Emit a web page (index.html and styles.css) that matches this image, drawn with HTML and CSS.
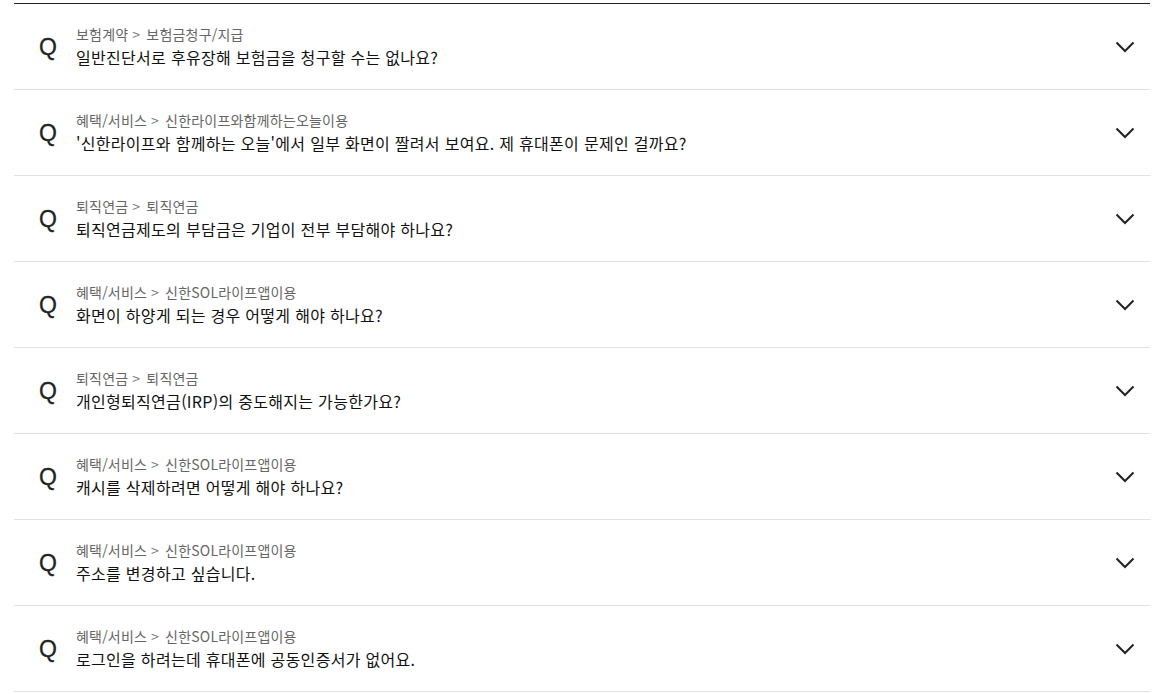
FILE: index.html
```html
<!DOCTYPE html>
<html lang="ko">
<head>
  <meta charset="UTF-8" />
  <title>자주 묻는 질문</title>
  <link rel="stylesheet" href="styles.css">
</head>
<body>
  <ul class="faq-list">
    <li class="faq-item">
      <span class="faq-q">Q</span>
      <div class="faq-text">
        <p class="faq-cate">보험계약<span class="sep">&gt;</span>보험금청구/지급</p>
        <p class="faq-title">일반진단서로 후유장해 보험금을 청구할 수는 없나요?</p>
      </div>
      <svg class="faq-arrow" width="20" height="12" viewBox="0 0 20 12"><path d="M1.5 1.5 L10 10 L18.5 1.5" fill="none" stroke="#222" stroke-width="2"/></svg>
    </li>
    <li class="faq-item">
      <span class="faq-q">Q</span>
      <div class="faq-text">
        <p class="faq-cate">혜택/서비스<span class="sep">&gt;</span>신한라이프와함께하는오늘이용</p>
        <p class="faq-title">'신한라이프와 함께하는 오늘'에서 일부 화면이 짤려서 보여요. 제 휴대폰이 문제인 걸까요?</p>
      </div>
      <svg class="faq-arrow" width="20" height="12" viewBox="0 0 20 12"><path d="M1.5 1.5 L10 10 L18.5 1.5" fill="none" stroke="#222" stroke-width="2"/></svg>
    </li>
    <li class="faq-item">
      <span class="faq-q">Q</span>
      <div class="faq-text">
        <p class="faq-cate">퇴직연금<span class="sep">&gt;</span>퇴직연금</p>
        <p class="faq-title">퇴직연금제도의 부담금은 기업이 전부 부담해야 하나요?</p>
      </div>
      <svg class="faq-arrow" width="20" height="12" viewBox="0 0 20 12"><path d="M1.5 1.5 L10 10 L18.5 1.5" fill="none" stroke="#222" stroke-width="2"/></svg>
    </li>
    <li class="faq-item">
      <span class="faq-q">Q</span>
      <div class="faq-text">
        <p class="faq-cate">혜택/서비스<span class="sep">&gt;</span>신한SOL라이프앱이용</p>
        <p class="faq-title">화면이 하양게 되는 경우 어떻게 해야 하나요?</p>
      </div>
      <svg class="faq-arrow" width="20" height="12" viewBox="0 0 20 12"><path d="M1.5 1.5 L10 10 L18.5 1.5" fill="none" stroke="#222" stroke-width="2"/></svg>
    </li>
    <li class="faq-item">
      <span class="faq-q">Q</span>
      <div class="faq-text">
        <p class="faq-cate">퇴직연금<span class="sep">&gt;</span>퇴직연금</p>
        <p class="faq-title">개인형퇴직연금(IRP)의 중도해지는 가능한가요?</p>
      </div>
      <svg class="faq-arrow" width="20" height="12" viewBox="0 0 20 12"><path d="M1.5 1.5 L10 10 L18.5 1.5" fill="none" stroke="#222" stroke-width="2"/></svg>
    </li>
    <li class="faq-item">
      <span class="faq-q">Q</span>
      <div class="faq-text">
        <p class="faq-cate">혜택/서비스<span class="sep">&gt;</span>신한SOL라이프앱이용</p>
        <p class="faq-title">캐시를 삭제하려면 어떻게 해야 하나요?</p>
      </div>
      <svg class="faq-arrow" width="20" height="12" viewBox="0 0 20 12"><path d="M1.5 1.5 L10 10 L18.5 1.5" fill="none" stroke="#222" stroke-width="2"/></svg>
    </li>
    <li class="faq-item">
      <span class="faq-q">Q</span>
      <div class="faq-text">
        <p class="faq-cate">혜택/서비스<span class="sep">&gt;</span>신한SOL라이프앱이용</p>
        <p class="faq-title">주소를 변경하고 싶습니다.</p>
      </div>
      <svg class="faq-arrow" width="20" height="12" viewBox="0 0 20 12"><path d="M1.5 1.5 L10 10 L18.5 1.5" fill="none" stroke="#222" stroke-width="2"/></svg>
    </li>
    <li class="faq-item">
      <span class="faq-q">Q</span>
      <div class="faq-text">
        <p class="faq-cate">혜택/서비스<span class="sep">&gt;</span>신한SOL라이프앱이용</p>
        <p class="faq-title">로그인을 하려는데 휴대폰에 공동인증서가 없어요.</p>
      </div>
      <svg class="faq-arrow" width="20" height="12" viewBox="0 0 20 12"><path d="M1.5 1.5 L10 10 L18.5 1.5" fill="none" stroke="#222" stroke-width="2"/></svg>
    </li>
  </ul>
</body>
</html>
```

FILE: styles.css
```css
body {
  margin: 0;
  background: #fff;
  font-family: "Noto Sans CJK KR", "Noto Sans", sans-serif;
  color: #111;
}
.faq-list {
  list-style: none;
  margin: 3px 0 0 14px;
  padding: 0;
  width: 1136px;
  border-top: 1px solid #222;
}
.faq-item {
  display: flex;
  align-items: center;
  height: 85px;
  border-bottom: 1px solid #e2e2e2;
}
.faq-q {
  width: 62px;
  padding-left: 25px;
  box-sizing: border-box;
  font-family: "Liberation Sans", Arial, sans-serif;
  font-size: 23px;
  color: #222;
  margin-top: 2px;
  -webkit-text-stroke: 0.3px #222;
}
.faq-text {
  flex: 1;
}
.faq-cate {
  margin: 0;
  font-size: 14px;
  line-height: 20px;
  letter-spacing: 0.2px;
  color: #666;
}
.sep {
  margin: 0 6px 0 4px;
  color: #777;
}
.faq-title {
  margin: 1px 0 0;
  font-size: 16px;
  line-height: 24px;
  letter-spacing: 0.3px;
  color: #111;
}
.faq-arrow {
  margin-right: 15px;
  margin-top: 1px;
}
```
